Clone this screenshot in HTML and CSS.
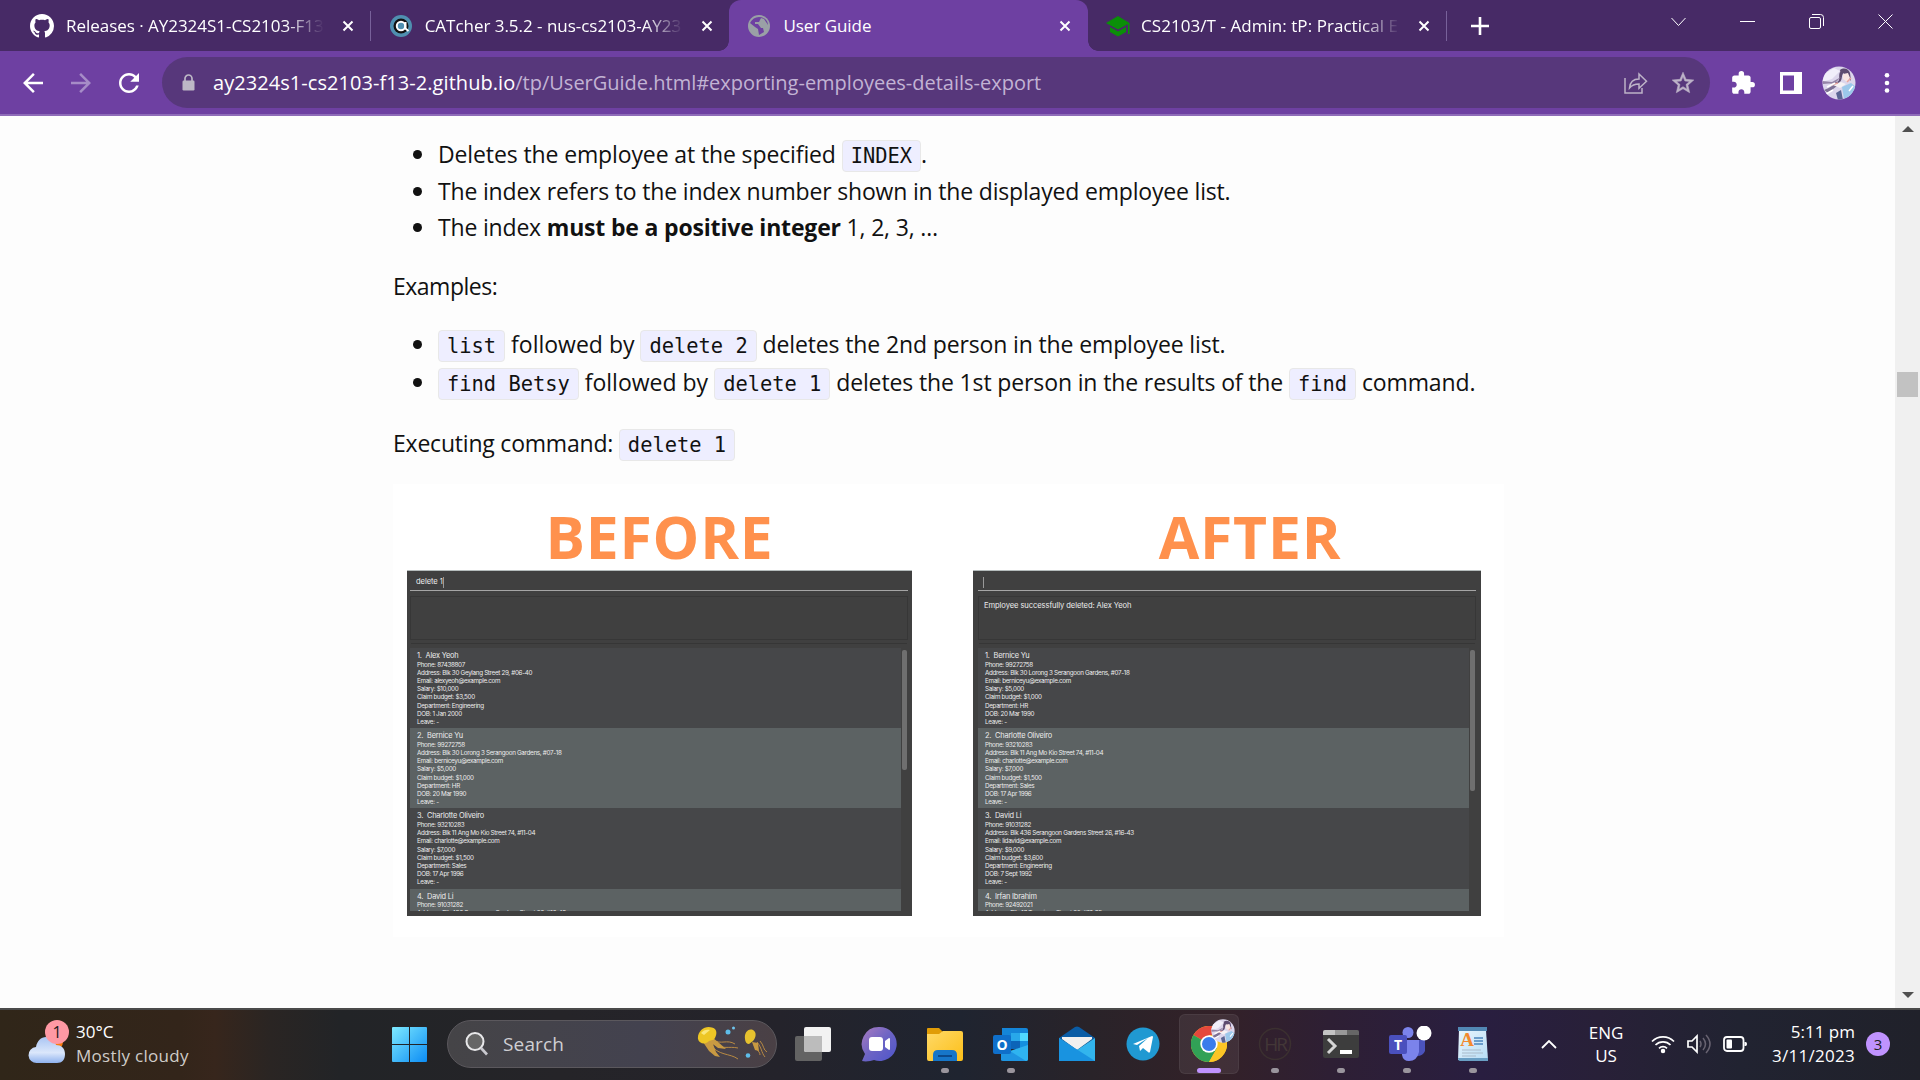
FILE: index.html
```html
<!DOCTYPE html>
<html lang="en">
<head>
<meta charset="utf-8">
<title>User Guide</title>
<link rel="stylesheet" href="styles.css">
</head>
<body>
<svg class="defs" width="0" height="0" aria-hidden="true">
  <defs>
    <symbol id="close" viewBox="0 0 12 12"><path d="M1.500 1.500l9 9M10.500 1.500l-9 9" stroke="#fff" stroke-width="2" fill="none"/></symbol>
    <clipPath id="round"><circle cx="17" cy="17" r="16.500"/></clipPath>
    <symbol id="avatar" viewBox="0 0 34 34">
      <g clip-path="url(#round)">
        <rect width="34" height="34" fill="#dcd6ec"/>
        <path d="M0 9l12-7 6 3-8 8-10 3z" fill="#f1effa"/>
        <path d="M18 4c4-3 9-1 10 3l1 8-3-4-5-4-2 4z" fill="#5d4c70"/>
        <path d="M21 8l5-1 2 5-3 4-4-3z" fill="#f8e6e3"/>
        <path d="M18 6c-2 4 1 8-3 10l-8 2 9-1c5-2 3-6 5-10z" fill="#5d4c70"/>
        <path d="M0 15l10 1 9-5-6 6-12 1z" fill="#9484a6"/>
        <path d="M2 24c6-2 10-6 16-9l-3 5-9 7z" fill="#7d7094"/>
        <path d="M11 19l8-3 5 2-6 4z" fill="#f6f2f4"/>
        <path d="M20 21l9-4 5 4-5 9-7 3z" fill="#9cc8ea"/>
        <path d="M14 27l5-3 2 10h-5z" fill="#5b6593"/>
        <path d="M9 19l7-2M25 16l4-4" stroke="#e8a6a0" stroke-width="1.500"/>
        <path d="M4 28l7-4M27 25l4-5M5 21l8-4" stroke="#fff" stroke-width="1.500"/>
      </g>
    </symbol>
  </defs>
</svg>

<header class="tabstrip">
  <div class="tab divided">
    <svg class="tab-icon" viewBox="0 0 16 16" fill="#fff"><path d="M8 0C3.580 0 0 3.580 0 8c0 3.540 2.290 6.530 5.470 7.590.4.070.550-.170.550-.380 0-.190-.010-.820-.010-1.490-2.010.370-2.530-.490-2.690-.940-.090-.230-.480-.940-.820-1.130-.280-.150-.680-.520-.010-.530.630-.010 1.080.580 1.230.820.720 1.210 1.870.870 2.330.660.070-.520.280-.870.510-1.070-1.780-.2-3.640-.890-3.640-3.950 0-.870.310-1.590.820-2.150-.080-.2-.360-1.020.080-2.120 0 0 .670-.210 2.200.820.640-.180 1.320-.270 2-.270s1.360.090 2 .270c1.530-1.040 2.200-.820 2.200-.820.440 1.100.160 1.920.080 2.120.510.560.820 1.270.820 2.150 0 3.070-1.870 3.750-3.650 3.950.290.250.540.730.540 1.480 0 1.070-.010 1.930-.010 2.200 0 .210.150.460.550.380A8.010 8.010 0 0 0 16 8c0-4.420-3.580-8-8-8z"/></svg>
    <span class="tab-title fade">Releases · AY2324S1-CS2103-F13</span>
    <svg class="tab-close"><use href="#close"/></svg>
  </div>
  <div class="tab">
    <svg class="tab-icon" viewBox="0 0 24 24"><circle cx="12" cy="12" r="11" fill="#4f8fb0"/><circle cx="12" cy="12" r="7.500" fill="#111"/><circle cx="12" cy="12" r="4.200" fill="#4f8fb0" stroke="#fff" stroke-width="2"/><path d="M16.500 8v6.500l3 2.500" stroke="#fff" stroke-width="2" fill="none"/></svg>
    <span class="tab-title fade">CATcher 3.5.2 - nus-cs2103-AY23</span>
    <svg class="tab-close"><use href="#close"/></svg>
  </div>
  <div class="tab active">
    <svg class="tab-icon" viewBox="0 0 24 24"><circle cx="12" cy="12" r="11" fill="#9aa0a6"/><path d="M3 9l5 4c1 1 2 1 3 2l1 6 5-3-1-4h-2l-3-4H8V8h4l2-4 3 1 4 6c0-5-4-8-9-8-4 0-7 2-9 6z" fill="#6e40a2"/></svg>
    <span class="tab-title">User Guide</span>
    <svg class="tab-close"><use href="#close"/></svg>
  </div>
  <div class="tab divided wide-text">
    <svg class="tab-icon" viewBox="0 0 24 24" fill="#0a8f08"><path d="M4 13v5l8 4.500 8-4.500v-5l-8 4.500L4 13zM12 2 0 9l12 6.500 10-5.500V20h1.500V9L12 2z"/></svg>
    <span class="tab-title fade">CS2103/T - Admin: tP: Practical E</span>
    <svg class="tab-close"><use href="#close"/></svg>
  </div>
  <svg class="new-tab" viewBox="0 0 18 18"><path d="M9 0v18M0 9h18" stroke="#fff" stroke-width="2.600"/></svg>
  <div class="window-buttons">
    <svg viewBox="0 0 15 15"><path d="M.5 4l7 7.500 7-7.500"/></svg>
    <svg viewBox="0 0 15 15"><path d="M0 7.500h15"/></svg>
    <svg viewBox="0 0 15 15"><rect x=".5" y="3.500" width="11" height="11" rx="1.500"/><path d="M3 .5h8.500a3 3 0 0 1 3 3V12"/></svg>
    <svg viewBox="0 0 15 15"><path d="M.5.5l14 14M14.500.5l-14 14"/></svg>
  </div>
</header>

<nav class="toolbar">
  <svg class="nav-icon" viewBox="0 0 24 24" fill="#fff"><path d="M20 11H7.830l5.590-5.590L12 4l-8 8 8 8 1.410-1.410L7.830 13H20v-2z"/></svg>
  <svg class="nav-icon" viewBox="0 0 24 24" fill="#a68cc7"><path d="M4 11h12.170l-5.590-5.590L12 4l8 8-8 8-1.410-1.410L16.170 13H4v-2z"/></svg>
  <svg class="nav-icon" viewBox="0 0 24 24" fill="#fff"><path d="M17.650 6.350C16.200 4.900 14.210 4 12 4c-4.420 0-7.990 3.580-7.990 8s3.570 8 7.990 8c3.730 0 6.840-2.550 7.730-6h-2.080c-.820 2.330-3.040 4-5.650 4-3.310 0-6-2.690-6-6s2.690-6 6-6c1.660 0 3.140.690 4.220 1.780L13 11h7V4l-2.350 2.350z"/></svg>
  <div class="omnibox">
    <svg class="lock" viewBox="0 0 13 17"><path d="M3 7V4.500a3.500 3.500 0 0 1 7 0V7" fill="none" stroke="#bdb8c6" stroke-width="1.700"/><rect x=".5" y="6.500" width="12" height="10" rx="1.200" fill="#bdb8c6"/></svg>
    <span class="url"><span class="host">ay2324s1-cs2103-f13-2.github.io</span>/tp/UserGuide.html#exporting-employees-details-export</span>
    <svg class="share" viewBox="0 0 24 22" fill="none" stroke="#bdb3c8" stroke-width="1.500"><path d="M1 6v15h17v-5"/><path d="M5.500 16c.5-6 4-9 9.500-9V2l7.500 7.200-7.500 7V12c-4 0-7 1-9.500 4z"/></svg>
    <svg class="star" viewBox="0 0 24 24" fill="#bdb3c8" stroke="#bdb3c8" stroke-width=".5"><path d="M22 9.240l-7.190-.620L12 2 9.190 8.630 2 9.240l5.460 4.730L5.820 21 12 17.270 18.180 21l-1.630-7.030L22 9.240zM12 15.400l-3.760 2.270 1-4.280-3.320-2.880 4.380-.380L12 6.100l1.710 4.040 4.380.380-3.320 2.880 1 4.280L12 15.400z"/></svg>
  </div>
  <svg class="puzzle" viewBox="0 0 24 24" fill="#fff"><path d="M20.500 11H19V7c0-1.100-.9-2-2-2h-4V3.500a2.500 2.500 0 0 0-5 0V5H4c-1.100 0-1.990.9-1.990 2v3.800H3.500c1.490 0 2.700 1.210 2.700 2.700s-1.210 2.700-2.700 2.700H2V20c0 1.100.9 2 2 2h3.800v-1.500c0-1.490 1.210-2.700 2.700-2.700s2.700 1.210 2.700 2.700V22H17c1.100 0 2-.9 2-2v-4h1.500a2.500 2.500 0 0 0 0-5z"/></svg>
  <svg class="panel-icon" viewBox="0 0 22 22"><path fill="#fff" fill-rule="evenodd" d="M0 0h22v22H0zM3 3.500v15h11v-15z"/></svg>
  <svg class="profile"><use href="#avatar"/></svg>
  <svg class="kebab" viewBox="0 0 6 22" fill="#fff"><circle cx="3" cy="3.200" r="2.300"/><circle cx="3" cy="11" r="2.300"/><circle cx="3" cy="18.500" r="2.300"/></svg>
</nav>

<div class="viewport">
  <main class="page">
    <ul class="notes">
      <li class="first">Deletes the employee at the specified <code>INDEX</code>.</li>
      <li>The index refers to the index number shown in the displayed employee list.</li>
      <li>The index <b>must be a positive integer</b> 1, 2, 3, …</li>
    </ul>
    <p class="examples">Examples:</p>
    <ul class="samples">
      <li><code>list</code><span class="join"> followed by </span><code>delete 2</code> deletes the 2nd person in the employee list.</li>
      <li><code>find Betsy</code><span class="join"> followed by </span><code>delete 1</code> deletes the 1st person in the results of the <code>find</code> command.</li>
    </ul>
    <p class="executing">Executing command: <code>delete 1</code></p>

    <figure class="comparison">
      <section class="shot before">
        <h2>BEFORE</h2>
        <div class="app">
          <div class="command">delete 1<i class="caret"></i></div>
          <div class="result"></div>
          <div class="people">
            <div class="list">
              <article><h3>1.&nbsp; Alex Yeoh</h3><p>Phone: 87438807</p><p>Address: Blk 30 Geylang Street 29, #06-40</p><p>Email: alexyeoh@example.com</p><p>Salary: $10,000</p><p>Claim budget: $3,500</p><p>Department: Engineering</p><p>DOB: 1 Jan 2000</p><p>Leave: -</p></article>
              <article><h3>2.&nbsp; Bernice Yu</h3><p>Phone: 99272758</p><p>Address: Blk 30 Lorong 3 Serangoon Gardens, #07-18</p><p>Email: berniceyu@example.com</p><p>Salary: $5,000</p><p>Claim budget: $1,000</p><p>Department: HR</p><p>DOB: 20 Mar 1990</p><p>Leave: -</p></article>
              <article><h3>3.&nbsp; Charlotte Oliveiro</h3><p>Phone: 93210283</p><p>Address: Blk 11 Ang Mo Kio Street 74, #11-04</p><p>Email: charlotte@example.com</p><p>Salary: $7,000</p><p>Claim budget: $1,500</p><p>Department: Sales</p><p>DOB: 17 Apr 1996</p><p>Leave: -</p></article>
              <article><h3>4.&nbsp; David Li</h3><p>Phone: 91031282</p><p>Address: Blk 436 Serangoon Gardens Street 26, #16-43</p></article>
            </div>
            <div class="thumb"></div>
          </div>
        </div>
      </section>
      <section class="shot after">
        <h2>AFTER</h2>
        <div class="app">
          <div class="command"><i class="caret"></i></div>
          <div class="result">Employee successfully deleted: Alex Yeoh</div>
          <div class="people">
            <div class="list">
              <article><h3>1.&nbsp; Bernice Yu</h3><p>Phone: 99272758</p><p>Address: Blk 30 Lorong 3 Serangoon Gardens, #07-18</p><p>Email: berniceyu@example.com</p><p>Salary: $5,000</p><p>Claim budget: $1,000</p><p>Department: HR</p><p>DOB: 20 Mar 1990</p><p>Leave: -</p></article>
              <article><h3>2.&nbsp; Charlotte Oliveiro</h3><p>Phone: 93210283</p><p>Address: Blk 11 Ang Mo Kio Street 74, #11-04</p><p>Email: charlotte@example.com</p><p>Salary: $7,000</p><p>Claim budget: $1,500</p><p>Department: Sales</p><p>DOB: 17 Apr 1996</p><p>Leave: -</p></article>
              <article><h3>3.&nbsp; David Li</h3><p>Phone: 91031282</p><p>Address: Blk 436 Serangoon Gardens Street 26, #16-43</p><p>Email: lidavid@example.com</p><p>Salary: $9,000</p><p>Claim budget: $3,600</p><p>Department: Engineering</p><p>DOB: 7 Sept 1992</p><p>Leave: -</p></article>
              <article><h3>4.&nbsp; Irfan Ibrahim</h3><p>Phone: 92492021</p><p>Address: Blk 47 Tampines Street 20, #17-35</p></article>
            </div>
            <div class="thumb"></div>
          </div>
        </div>
      </section>
    </figure>
  </main>
  <aside class="scrollbar">
    <svg viewBox="0 0 12 6"><path d="M0 6l6-6 6 6z"/></svg>
    <div class="scroll-thumb"></div>
    <svg viewBox="0 0 12 6"><path d="M0 0l6 6 6-6z"/></svg>
  </aside>
</div>

<footer class="taskbar">
  <div class="weather">
    <svg class="weather-icon" viewBox="0 0 42 44">
      <defs><linearGradient id="cloud" x2="0" y2="1"><stop offset="0" stop-color="#a9c4f2"/><stop offset=".6" stop-color="#dbe7fb"/><stop offset="1" stop-color="#8fb2ee"/></linearGradient></defs>
      <circle cx="26" cy="22" r="9" fill="#f8790d"/>
      <path d="M9 43a8 8 0 0 1-1-16c1-6 5-10 10-10s9 3 10 8c5 0 9 3 9 9s-3 9-8 9z" fill="url(#cloud)"/>
      <circle cx="29" cy="12" r="12" fill="#ff99a4"/><text x="29" y="17.500" text-anchor="middle" class="badge-text">1</text>
    </svg>
    <div class="weather-text"><span>30°C</span><span class="dim">Mostly cloudy</span></div>
  </div>

  <div class="dock">
    <svg class="start" viewBox="0 0 35 35"><defs><linearGradient id="win" x2="1" y2="1"><stop offset="0" stop-color="#7eeaff"/><stop offset="1" stop-color="#0c8cf4"/></linearGradient></defs><path fill="url(#win)" d="M1 0h16v17H0V1q0-1 1-1zM18 0h16q1 0 1 1v16H18zM0 18h17v17H1q-1 0-1-1zM18 18h17v16q0 1-1 1H18z"/></svg>
    <div class="search">
      <svg class="lens" viewBox="0 0 24 24"><circle cx="10" cy="9.500" r="8.500" fill="#666" stroke="#e8e8ea" stroke-width="2"/><path d="M16 16l6 6.500" stroke="#c9c9cf" stroke-width="2.600"/></svg>
      <span class="search-label">Search</span>
      <svg class="jelly" viewBox="0 0 72 36">
        <g fill="none" stroke="#b98a43" stroke-width="1"><path d="M16 14c8 5 14-1 22 4M15 17c9 7 17 3 26 5M13 18c8 12 20 9 28 15M63 15c4 4 3 9 7 11M60 16c5 6 4 10 8 15M57 17c0 7 6 7 6 12"/></g>
        <path d="M6 16l6 9 6 5 5 1-4-5-3-8 5 4 8 1-8-7-5-4z" fill="#c99a42"/><path d="M55 16l3 8 4 1-1-8z" fill="#c99a42"/>
        <path d="M1 13C0 5 8-1 15 1.500c6 1 5 8 2 12l-5 1.500c-3 4-10 3-11-2z" fill="#edc625"/><path d="M4 7c2-3 6-4 9-3l-6 5z" fill="#fae77b"/>
        <path d="M48 13c-1-6 3-11 8-9 4 2 3 8 0 11l-4 3c-2 0-4-2-4-5z" fill="#e6c12e"/>
        <circle cx="31" cy="6" r="2.500" fill="#5ebdea"/><circle cx="36.500" cy="2" r="1.500" fill="#6fc5ee"/><circle cx="51" cy="29.500" r="2.300" fill="#5ebdea"/>
      </svg>
    </div>
    <div class="apps">
      <div class="app-icon"><svg viewBox="0 0 36 36"><rect y="10" width="27" height="25" rx="2" fill="#636363"/><rect x="9" y="1" width="27" height="25" rx="2" fill="#f2f2f2"/><path d="M9 10h18v16H11q-2 0-2-2z" fill="#bcbcbc"/></svg></div>
      <div class="app-icon"><svg viewBox="0 0 36 36"><defs><linearGradient id="chat" x2="1" y2="1"><stop offset="0" stop-color="#a97bc0"/><stop offset=".5" stop-color="#6c64c4"/><stop offset="1" stop-color="#4d55cb"/></linearGradient></defs><path d="M18 1a17 17 0 1 1-5 33c-3 1-8 2-12 1l3-7A17 17 0 0 1 18 1z" fill="url(#chat)"/><rect x="8" y="11" width="14" height="14" rx="3" fill="#fff"/><path d="M24 15l4-3q1 0 1 1v10q0 1-1 1l-4-3z" fill="#fff"/></svg></div>
      <div class="app-icon open"><svg viewBox="0 0 36 36"><defs><linearGradient id="fold" x2="1" y2="1"><stop offset="0" stop-color="#ffd968"/><stop offset="1" stop-color="#fcbf18"/></linearGradient></defs><path d="M0 8V3q0-1 1-1h11l4 4-3 4z" fill="#e09c07"/><path d="M0 8h12l4-3h18q2 0 2 2v26q0 2-2 2H2q-2 0-2-2z" fill="url(#fold)"/><path d="M6 35v-6q0-5 5-5h14q5 0 5 5v6z" fill="#1676c9"/><path d="M11 30h14" stroke="#0b4a8c" stroke-width="2"/></svg></div>
      <div class="app-icon open"><svg viewBox="0 0 36 36"><path d="M9 2h24q2 0 2 2v16H9z" fill="#1485d8"/><path d="M18 7h9v8h-9z" fill="#28a8ea"/><path d="M27 7h8v8h-8z" fill="#50d9ff"/><path d="M27 15h8v8h-8z" fill="#1490df"/><path d="M18 15h9v8h-9z" fill="#0c64b8"/><path d="M8 34V22l14 4 13-7v14q0 2-2 2H10q-2 0-2-1z" fill="#1f95e2"/><path d="M35 19v14q0 2-2 2L17 25z" fill="#2fb4f0"/><rect y="9" width="18" height="19" rx="2" fill="#0f6fca"/><text x="9" y="24" text-anchor="middle" class="glyph-white">O</text></svg></div>
      <div class="app-icon"><svg viewBox="0 0 36 36"><path d="M0 12L16 1q2-1 4 0l16 11-18 12z" fill="#0a5ca5"/><path d="M3 11h30v2L18 24 3 13z" fill="#f1f0ef"/><path d="M0 12l18 12 18-12v23H0z" fill="#32b5ed"/><path d="M0 12l36 23H0z" fill="#1993e0"/></svg></div>
      <div class="app-icon"><svg viewBox="0 0 36 36"><circle cx="18" cy="18" r="16.500" fill="#2099d2"/><path d="M8 18l19-8q1 0 1 1l-3 15q-1 1-2 0l-5-4-3 3-1-5 9-8-11 7-4-1z" fill="#fff"/></svg></div>
      <div class="app-icon open current">
        <svg viewBox="0 0 36 36"><circle cx="18" cy="18" r="18" fill="#fbc116"/><path d="M18 18L2.400 9A18 18 0 0 1 33.600 9z" fill="#e33b2e"/><path d="M18 18L2.400 9A18 18 0 0 0 18 36l8-14z" fill="#229a4a"/><path d="M18 18v-9h15.600A18 18 0 0 1 18 36l8-14z" fill="#fbc116"/><circle cx="18" cy="18" r="8.700" fill="#fff"/><circle cx="18" cy="18" r="7" fill="#2d73ea"/></svg>
        <svg class="mini-avatar" viewBox="0 0 34 34"><use href="#avatar" width="34" height="34"/></svg>
      </div>
      <div class="app-icon open"><svg viewBox="0 0 36 36"><circle cx="18" cy="18" r="15.500" fill="none" stroke="#3b3030" stroke-width="1.500"/><text x="18" y="25" text-anchor="middle" class="glyph-hr">HR</text></svg></div>
      <div class="app-icon open"><svg viewBox="0 0 36 36"><rect y="4" width="36" height="28" rx="2" fill="#3d3d3d"/><path d="M0 9V6q0-2 2-2h10v5z" fill="#c4c4c4"/><path d="M12 4h12v5H12z" fill="#999"/><path d="M24 4h10q2 0 2 2v3H24z" fill="#666"/><path d="M5 13l7 7-7 7" fill="none" stroke="#d5d5d5" stroke-width="3"/><rect x="17" y="24" width="12" height="4" fill="#fff"/></svg></div>
      <div class="app-icon open"><svg class="teams" viewBox="0 0 44 36"><circle cx="19" cy="6.500" r="5.500" fill="#7b83eb"/><path d="M27 14h9v11q-2 5-8 5z" fill="#4b53bc"/><path d="M13 14h17v12q-2 9-10 9-6 0-7-6z" fill="#7b83eb"/><rect y="9" width="18" height="19" rx="2" fill="#4a50bd"/><text x="9" y="24" text-anchor="middle" class="glyph-white">T</text><circle cx="35" cy="7" r="7.500" fill="#fff"/></svg></div>
      <div class="app-icon open"><svg viewBox="0 0 36 36"><defs><linearGradient id="pad" x2="1" y2="1"><stop offset="0" stop-color="#eaf6fe"/><stop offset="1" stop-color="#b7dcf4"/></linearGradient></defs><path d="M4 4h27l2 30H3z" fill="url(#pad)"/><rect x="3" y="1" width="29" height="4" fill="#5288b4"/><path d="M3 32h30v3H5q-2 0-2-3z" fill="#6a9fc4"/><text x="12" y="20" text-anchor="middle" class="glyph-a">A</text><path d="M19 12h9M19 15h9M19 18h9" stroke="#4b85bd" stroke-width="1.500"/><path d="M7 24h19M7 27h21M7 30h14" stroke="#a9bac9"/></svg></div>
    </div>
  </div>

  <div class="tray">
    <svg class="chevron" viewBox="0 0 16 9"><path d="M1 8l7-7 7 7" fill="none" stroke="#fff" stroke-width="1.800"/></svg>
    <div class="lang"><span>ENG</span><span>US</span></div>
    <div class="status">
      <svg viewBox="0 0 24 20" fill="none" stroke="#fff" stroke-width="1.700"><path d="M1 7.500a15.500 15.500 0 0 1 22 0M4.500 11a10.500 10.500 0 0 1 15 0M8 14.300a5.800 5.800 0 0 1 8 0"/><circle cx="12" cy="17" r="1.400" fill="#fff"/></svg>
      <svg viewBox="0 0 24 20" fill="none" stroke="#fff" stroke-width="1.700"><path d="M1 7h4l5-5v16l-5-5H1z"/><path d="M13 7q2 3 0 6M16 4q5 6 0 12M19 1q8 9 0 18" stroke="#686371" stroke-width="1.500"/></svg>
      <svg viewBox="0 0 24 20"><rect x="1" y="3" width="19.500" height="14" rx="3" fill="none" stroke="#fff" stroke-width="1.800"/><rect x="3.500" y="5.500" width="5.500" height="9" rx="1" fill="#fff"/><path d="M21.500 8h1q1.500 0 1.500 2t-1.500 2h-1z" fill="#fff"/></svg>
    </div>
    <div class="clock"><span>5:11 pm</span><span class="date">3/11/2023</span></div>
    <div class="count">3</div>
  </div>
</footer>
</body>
</html>
```

FILE: styles.css
```css
* { box-sizing: border-box; }
body { margin: 0; width: 1920px; height: 1080px; overflow: hidden; display: flex; flex-direction: column; font-family: "Open Sans", "Noto Sans", sans-serif; background: #fdfdfd; }
svg { display: block; flex: none; }
.defs { position: absolute; }
p, h2, h3, ul, figure { margin: 0; padding: 0; }

/* Tab strip */
.tabstrip { flex: none; height: 51px; background: #472a66; display: flex; align-items: center; padding-left: 12px; color: #fff; }
.tab { position: relative; flex: none; width: 358.7px; height: 51px; display: flex; align-items: center; padding-left: 18px; }
.tab-icon { width: 24px; height: 24px; }
.tab-title { width: 258px; margin-left: 12px; font-size: 17px; line-height: 26px; white-space: nowrap; letter-spacing: -.03px; }
.wide-text .tab-title { letter-spacing: .05px; margin-left: 11px; width: 259px; }
.fade { mask-image: linear-gradient(90deg, #000 85%, transparent 100%); }
.tab-close { width: 12px; height: 12px; margin-left: 18px; }
.active { background: #6e40a2; border-radius: 12px 12px 0 0; }
.active::before, .active::after { content: ""; position: absolute; bottom: 0; width: 10px; height: 10px; }
.active::before { right: 100%; background: radial-gradient(circle at 0 0, transparent 9.5px, #6e40a2 10px); }
.active::after { left: 100%; background: radial-gradient(circle at 100% 0, transparent 9.5px, #6e40a2 10px); }
.divided { background: linear-gradient(#78619a, #78619a) no-repeat right center / 1px 30px; }
.new-tab { width: 18px; height: 18px; margin-left: 24px; }
.window-buttons { margin-left: auto; padding-right: 27px; height: 43px; align-self: flex-start; display: flex; align-items: center; gap: 54px; }
.window-buttons svg { width: 15px; height: 15px; fill: none; stroke: #fff; stroke-width: 1; }

/* Toolbar */
.toolbar { flex: none; height: 65px; background: #6e40a2; border-bottom: 2px solid #8f6cb9; display: flex; align-items: center; padding-left: 18px; }
.nav-icon { width: 30px; height: 30px; margin-right: 18px; }
.omnibox { width: 1548px; height: 51px; border-radius: 26px; background: #57377b; display: flex; align-items: center; padding: 0 14px 0 20px; }
.lock { width: 13px; height: 17px; }
.url { margin-left: 18px; font-size: 20px; color: #c2b3d4; white-space: nowrap; flex: 1; letter-spacing: -.01px; }
.host { color: #fff; letter-spacing: .06px; }
.share { width: 24px; height: 22px; margin-right: 22px; }
.star { width: 26px; height: 26px; }
.puzzle { width: 26px; height: 26px; margin-left: 20px; }
.panel-icon { width: 22px; height: 22px; margin-left: 24px; }
.profile { width: 34px; height: 34px; margin-left: 20px; }
.kebab { width: 6px; height: 22px; margin-left: 28px; }

/* Page */
.viewport { flex: none; height: 892px; display: flex; justify-content: space-between; }
.page { width: 1111px; margin-left: 393px; font-size: 23px; letter-spacing: -.18px; color: #111; line-height: 36px; white-space: nowrap; }
ul { list-style: none; }
li { position: relative; padding-left: 45px; }
li::before { content: ""; position: absolute; left: 20px; top: 14px; width: 9px; height: 9px; border-radius: 50%; background: #111; }
.notes { padding-top: 20px; }
.notes li { height: 36.5px; }
.notes .first { letter-spacing: -.12px; }
code { display: inline-block; height: 32px; line-height: 30px; padding: 0 8px; border: 1px solid #e8e8e8; border-radius: 4px; background: #eeeeff; font-family: "DejaVu Sans Mono", monospace; font-size: 20.4px; letter-spacing: 0; }
.join { letter-spacing: 0; }
.examples { margin-top: 22px; letter-spacing: -.5px; }
.samples { margin-top: 22.5px; letter-spacing: -.13px; }
.samples li { height: 38px; }
.executing { margin-top: 22.5px; letter-spacing: -.21px; }

/* Before / after figure */
.comparison { margin-top: 23.5px; height: 453px; background: #fff; display: flex; padding-left: 14px; gap: 61px; letter-spacing: 0; }
.shot { width: 505px; }
.after { width: 508px; }
h2 { height: 86px; padding-top: 10px; line-height: 84px; text-align: center; font-size: 58.8px; font-weight: 700; letter-spacing: .8px; color: #ff914d; }
.after h2 { padding-left: 46px; }
.app { height: 346px; background: #404040; border-top: 1px solid #b5bcbc; padding: 0 4px 0 3px; color: #ededed; font-family: Inter, sans-serif; font-size: 7.6px; letter-spacing: -.09px; }
.command { height: 20px; border-bottom: 1px solid #a5a5a5; display: flex; align-items: center; padding: 3px 5px 0 6px; line-height: 10px; }
.caret { width: 1px; height: 11px; background: #999; }
.result { height: 44px; margin: 5px 0; border: 1px solid #373737; padding: 4px 5px; line-height: 9px; box-shadow: 0 4px 0 -1px #404040, 0 5px 0 -1px #363636; }
.people { display: flex; gap: 1px; margin-top: 8px; height: 263px; }
.list { width: 491px; overflow: hidden; }
article { height: 80.2px; padding: 3px 7px 0; background: #464749; }
article:nth-child(even) { background: #5c6263; }
h3 { font-size: 7.4px; font-weight: 400; line-height: 10px; height: 9.6px; letter-spacing: -.19px; }
article p { font-size: 6.3px; line-height: 8.2px; height: 8.2px; letter-spacing: -.325px; }
.thumb { width: 5px; height: 120px; margin-top: 2px; border-radius: 2px; background: #6f6f6f; }
.after .app { padding: 0 5px; }
.after .command { padding-left: 5px; }
.after .thumb { height: 141px; }

.scrollbar { width: 25px; background: #f0f0f0; display: flex; flex-direction: column; align-items: center; padding: 10px 0; }
.scrollbar svg { width: 12px; height: 6px; fill: #505050; }
.scroll-thumb { width: 21px; height: 25px; margin: 240px 0 auto; background: #c2c2c2; }

/* Taskbar */
.taskbar { flex: none; height: 72px; padding-bottom: 2px; border-top: 2px solid #4a4a4a; display: flex; align-items: center; color: #fff;
  background: linear-gradient(90deg, #302619 0, #33251a 180px, #37261c 215px, #2a2523 270px, #222427 340px, #252428 560px, #24232b 780px, #1f2430 960px, #292329 1090px, #332128 1220px, #2e1f34 1330px, #291e40 1480px, #282038 1600px, #212331 1740px, #20212a 1920px); }
.weather { width: 392px; display: flex; align-items: flex-start; padding-left: 28px; }
.weather-icon { width: 42px; height: 44px; }
.badge-text { font-size: 16px; fill: #1a1a1a; }
.weather-text { margin-left: 6px; display: flex; flex-direction: column; font-size: 17px; line-height: 24px; }
.dim { color: #cfccc8; letter-spacing: .3px; }
.dock { display: flex; align-items: center; }
.start { width: 35px; height: 35px; }
.search { width: 330px; height: 48px; margin-left: 20px; border-radius: 24px; border: 1px solid #5b585d; background: linear-gradient(90deg, #454447, #43424f 60%, #4a4045); display: flex; align-items: center; padding-left: 17px; }
.lens { width: 24px; height: 24px; }
.search-label { margin-left: 14px; font-size: 19px; letter-spacing: .15px; color: #cfcfd3; }
.jelly { width: 72px; height: 36px; margin-left: auto; margin-right: 7px; }
.apps { display: flex; margin-left: 3px; }
.app-icon { position: relative; width: 66px; height: 60px; display: flex; align-items: center; justify-content: center; }
.app-icon svg { width: 36px; height: 36px; }
.app-icon .teams { width: 44px; margin-left: 7px; }
.open::after { content: ""; position: absolute; left: 29px; bottom: 1px; width: 8px; height: 5px; border-radius: 3px; background: #9a959d; }
.current::before { content: ""; position: absolute; inset: 0 3px; border-radius: 6px; background: rgba(255,255,255,.07); border: 1px solid rgba(255,255,255,.06); }
.current::after { left: 21px; bottom: 1px; width: 24px; background: #c093ff; }
.app-icon .mini-avatar { position: absolute; width: 24px; height: 24px; left: 35px; top: 5px; }
.glyph-white { font: 700 14px "Open Sans", sans-serif; fill: #fff; }
.glyph-hr { font: 19px "Open Sans", sans-serif; fill: #433737; letter-spacing: -2px; }
.glyph-a { font: 700 19px "Liberation Serif", serif; fill: #f28a2e; }
.tray { margin-left: auto; display: flex; align-items: center; padding-right: 30px; }
.chevron { width: 16px; height: 9px; }
.lang { width: 40px; margin-left: 29px; display: flex; flex-direction: column; align-items: center; font-size: 17px; line-height: 23px; }
.status { display: flex; gap: 12px; margin-left: 25px; }
.status svg { width: 24px; height: 20px; }
.clock { width: 108px; display: flex; flex-direction: column; align-items: flex-end; font-size: 17px; line-height: 24px; }
.date { letter-spacing: .28px; }
.count { width: 24px; height: 24px; margin-left: 11px; border-radius: 50%; background: #c093ff; color: #222; font-size: 15px; line-height: 24px; text-align: center; }
```
